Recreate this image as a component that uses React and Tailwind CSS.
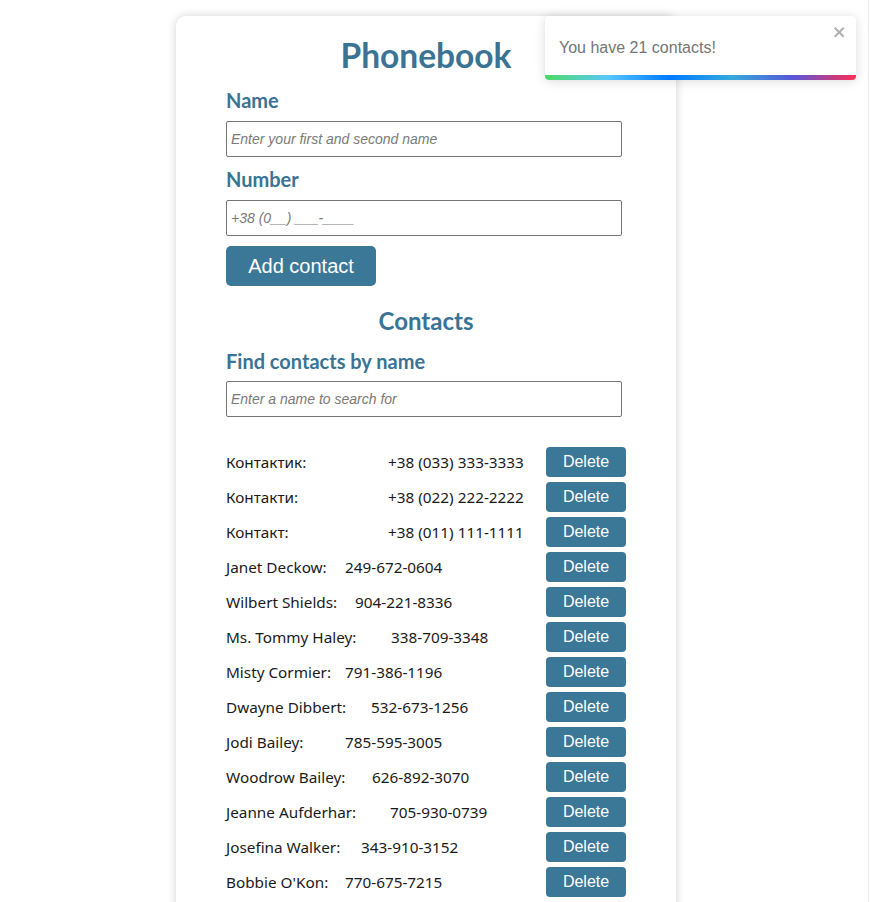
import React from "react";

const contacts = [
  { name: "Контактик:", number: "+38 (033) 333-3333", w: "w-[162px]" },
  { name: "Контакти:", number: "+38 (022) 222-2222", w: "w-[162px]" },
  { name: "Контакт:", number: "+38 (011) 111-1111", w: "w-[162px]" },
  { name: "Janet Deckow:", number: "249-672-0604", w: "w-[119px]" },
  { name: "Wilbert Shields:", number: "904-221-8336", w: "w-[129px]" },
  { name: "Ms. Tommy Haley:", number: "338-709-3348", w: "w-[165px]" },
  { name: "Misty Cormier:", number: "791-386-1196", w: "w-[119px]" },
  { name: "Dwayne Dibbert:", number: "532-673-1256", w: "w-[145px]" },
  { name: "Jodi Bailey:", number: "785-595-3005", w: "w-[119px]" },
  { name: "Woodrow Bailey:", number: "626-892-3070", w: "w-[146px]" },
  { name: "Jeanne Aufderhar:", number: "705-930-0739", w: "w-[164px]" },
  { name: "Josefina Walker:", number: "343-910-3152", w: "w-[135px]" },
  { name: "Bobbie O'Kon:", number: "770-675-7215", w: "w-[119px]" },
];

const heading = "font-['Lato',sans-serif] font-bold text-[#3a7393]";
const inputCls =
  "w-[396px] h-[36px] border border-[#767676] rounded-[2px] px-[4px] text-[14px] font-['Liberation_Sans',Arial,sans-serif] placeholder:italic placeholder:text-[#7a7a7a] outline-none";

export default function App() {
  return (
    <div className="relative w-[870px] h-[902px] overflow-hidden bg-white">
      <div className="absolute right-[1px] top-0 h-full w-[1px] bg-[#ececec]" />
      <div className="ml-[176px] mt-[16px] w-[500px] bg-white rounded-[10px] shadow-[0_0_10px_rgba(0,0,0,0.18)] px-[50px] pt-[17px] pb-[40px]">
        <h1 className={`${heading} text-[33.5px] leading-[44px] text-center`}>Phonebook</h1>
        <form className="flex flex-col">
          <label className={`${heading} text-[20px] leading-[26px] mt-[10px] mb-[8px]`}>Name</label>
          <input className={inputCls} placeholder="Enter your first and second name" />
          <label className={`${heading} text-[20px] leading-[26px] mt-[9px] mb-[8px]`}>Number</label>
          <input className={inputCls} placeholder="+38 (0__) ___-____" />
          <button
            type="button"
            className="mt-[10px] w-[150px] h-[40px] rounded-[5px] bg-[#3b7797] text-white text-[20px] font-['Liberation_Sans',Arial,sans-serif]"
          >
            Add contact
          </button>
        </form>
        <h2 className={`${heading} text-[24px] leading-[32px] text-center mt-[19px]`}>Contacts</h2>
        <label className={`${heading} block text-[20px] leading-[26px] mt-[11px] mb-[7px]`}>Find contacts by name</label>
        <input className={inputCls} placeholder="Enter a name to search for" />
        <ul className="mt-[30px] flex flex-col gap-[5px] w-[400px]">
          {contacts.map((c, i) => (
            <li key={i} className="flex items-center h-[30px] font-['Noto_Sans',sans-serif] text-[15.3px] text-[#1a1a1a]">
              <span className={`${c.w} shrink-0`}>{c.name}</span>
              <span>{c.number}</span>
              <button
                type="button"
                className="ml-auto w-[80px] h-[30px] rounded-[4px] bg-[#3b7797] text-white text-[16px] font-['Liberation_Sans',Arial,sans-serif]"
              >
                Delete
              </button>
            </li>
          ))}
        </ul>
      </div>

      <div className="absolute left-[545px] top-[16px] w-[311px] h-[64px] bg-white rounded-[4px] shadow-[0_1px_10px_0_rgba(0,0,0,0.1),0_2px_15px_0_rgba(0,0,0,0.05)] overflow-hidden">
        <div className="flex items-center h-full pl-[14px] pb-[1px] text-[16px] text-[#757575] font-['Liberation_Sans',Arial,sans-serif]">
          You have 21 contacts!
        </div>
        <svg className="absolute right-[9px] top-[8px] w-[14px] h-[16px] opacity-30" viewBox="0 0 14 16">
          <path
            fillRule="evenodd"
            d="M7.71 8.23l3.75 3.75-1.48 1.48-3.75-3.75-3.75 3.75L1 11.98l3.75-3.75L1 4.48 2.48 3l3.75 3.75L9.98 3l1.48 1.48-3.75 3.75z"
          />
        </svg>
        <div className="absolute left-0 bottom-0 h-[5px] w-full bg-[linear-gradient(to_right,#4cd964,#5ac8fa,#007aff,#34aadc,#5856d6,#ff2d55)]" />
      </div>
    </div>
  );
}
